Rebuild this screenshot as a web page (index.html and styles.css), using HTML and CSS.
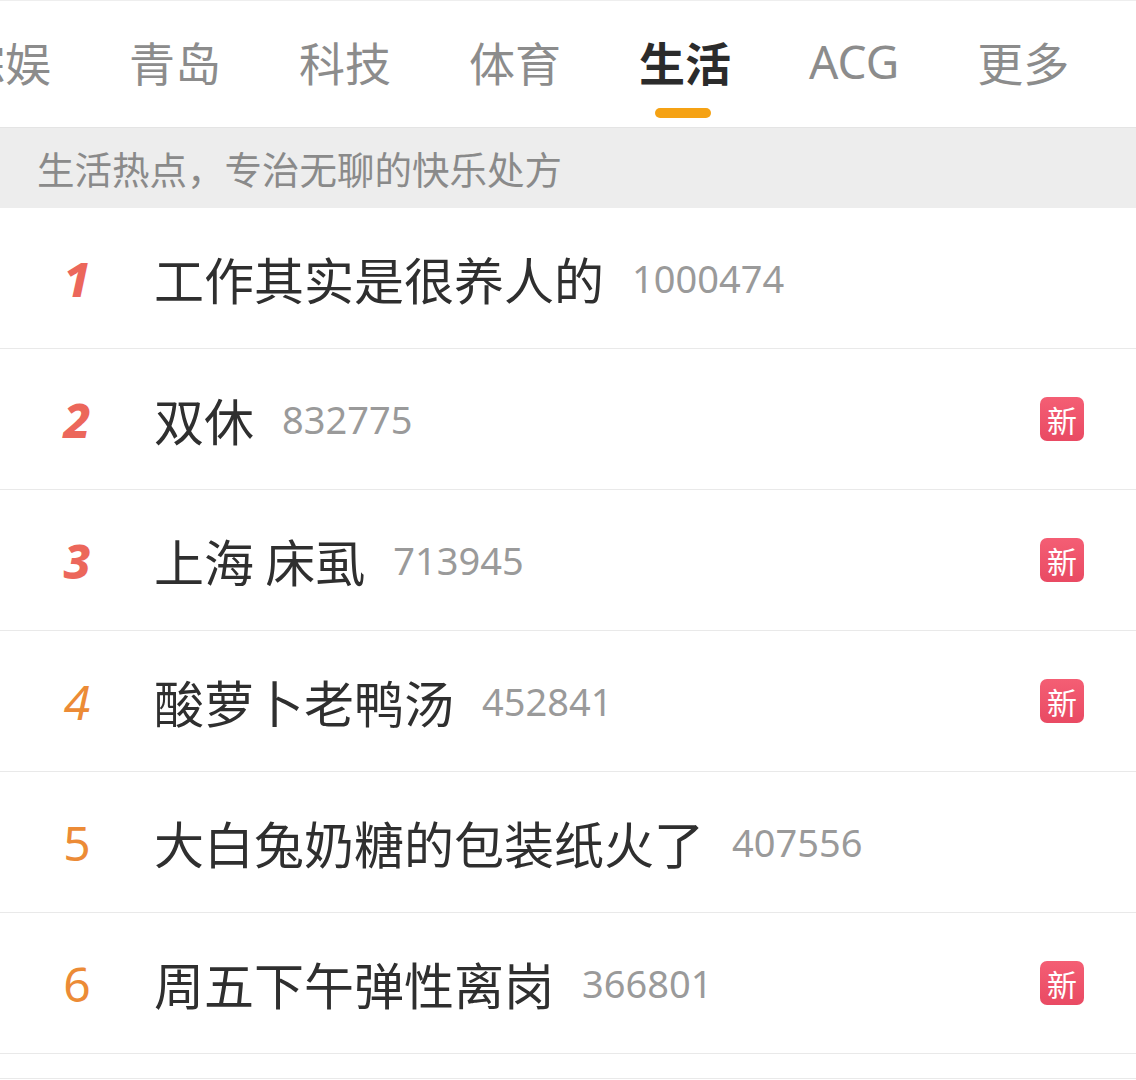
FILE: index.html
```html
<!DOCTYPE html>
<html lang="zh-CN">
<head>
    <meta charset="UTF-8">
    <meta name="viewport" content="width=device-width, initial-scale=1.0">
    <title>生活热搜</title>
    <link rel="stylesheet" href="styles.css">
</head>
<body>
    <div class="tabs">
        <div class="tab">综娱</div>
        <div class="tab">青岛</div>
        <div class="tab">科技</div>
        <div class="tab">体育</div>
        <div class="tab active">生活</div>
        <div class="tab latin">ACG</div>
        <div class="tab">更多</div>
    </div>
    <div class="banner">生活热点，专治无聊的快乐处方</div>

    <ul class="list">
        <li class="row">
            <span class="rank top">1</span>
            <span class="title">工作其实是很养人的</span>
            <span class="count">1000474</span>
        </li>
        <li class="row">
            <span class="rank top">2</span>
            <span class="title">双休</span>
            <span class="count">832775</span>
            <span class="badge">新</span>
        </li>
        <li class="row">
            <span class="rank top">3</span>
            <span class="title">上海 床虱</span>
            <span class="count">713945</span>
            <span class="badge">新</span>
        </li>
        <li class="row">
            <span class="rank mid slant">4</span>
            <span class="title">酸萝卜老鸭汤</span>
            <span class="count">452841</span>
            <span class="badge">新</span>
        </li>
        <li class="row">
            <span class="rank mid">5</span>
            <span class="title">大白兔奶糖的包装纸火了</span>
            <span class="count">407556</span>
        </li>
        <li class="row">
            <span class="rank mid">6</span>
            <span class="title">周五下午弹性离岗</span>
            <span class="count">366801</span>
            <span class="badge">新</span>
        </li>
        <li class="row last"></li>
    </ul>
</body>
</html>
```

FILE: styles.css
```css
html, body {
    height: 1080px;
    overflow: hidden;
}
body {
    margin: 0;
    background: #fff;
    font-family: "Noto Sans CJK SC", "Noto Sans", sans-serif;
}

/* top channel tabs */
.tabs {
    display: flex;
    gap: 78px;
    height: 127px;
    margin-left: -41px;
    border-top: 1px solid #eeeeee;
    box-sizing: border-box;
}
.tab {
    position: relative;
    font-size: 46px;
    line-height: 120px;
    color: #8c8c8c;
    white-space: nowrap;
}
.tab.latin {
    font-family: "Noto Sans", sans-serif;
}
.tab.active {
    color: #2b2b2b;
    font-weight: 700;
}
.tab.active::after {
    content: "";
    position: absolute;
    left: 50%;
    bottom: 9px;
    width: 56px;
    height: 10px;
    margin-left: -30px;
    border-radius: 5px;
    background: #f5a214;
}

.banner {
    height: 80px;
    line-height: 80px;
    padding-left: 37px;
    background: #ededed;
    border-top: 1px solid #e4e4e4;
    color: #8a8a8a;
    font-size: 37.5px;
}

/* hot list */
.list {
    list-style: none;
    margin: 0;
    padding: 0;
}
.row {
    display: flex;
    align-items: center;
    height: 140px;
    border-bottom: 1px solid #e9e9e9;
    padding-right: 52px;
}
.row.last {
    height: 24px;
}
.rank {
    width: 154px;
    text-align: center;
    font-family: "Noto Sans", sans-serif;
    font-size: 48px;
}
.rank.top {
    color: #ec675b;
    font-weight: 800;
    font-style: italic;
}
.rank.mid {
    color: #ec8b36;
}
.rank.slant {
    font-style: italic;
}
.title {
    font-size: 50px;
    color: #2f2f2f;
}
.count {
    margin-left: 28px;
    font-family: "Noto Sans", sans-serif;
    font-size: 38px;
    color: #9a9a9a;
}
.badge {
    margin-left: auto;
    width: 44px;
    height: 44px;
    line-height: 44px;
    text-align: center;
    border-radius: 7px;
    background: linear-gradient(#f45e74, #e94a63);
    color: #fff;
    font-size: 30px;
}
```
